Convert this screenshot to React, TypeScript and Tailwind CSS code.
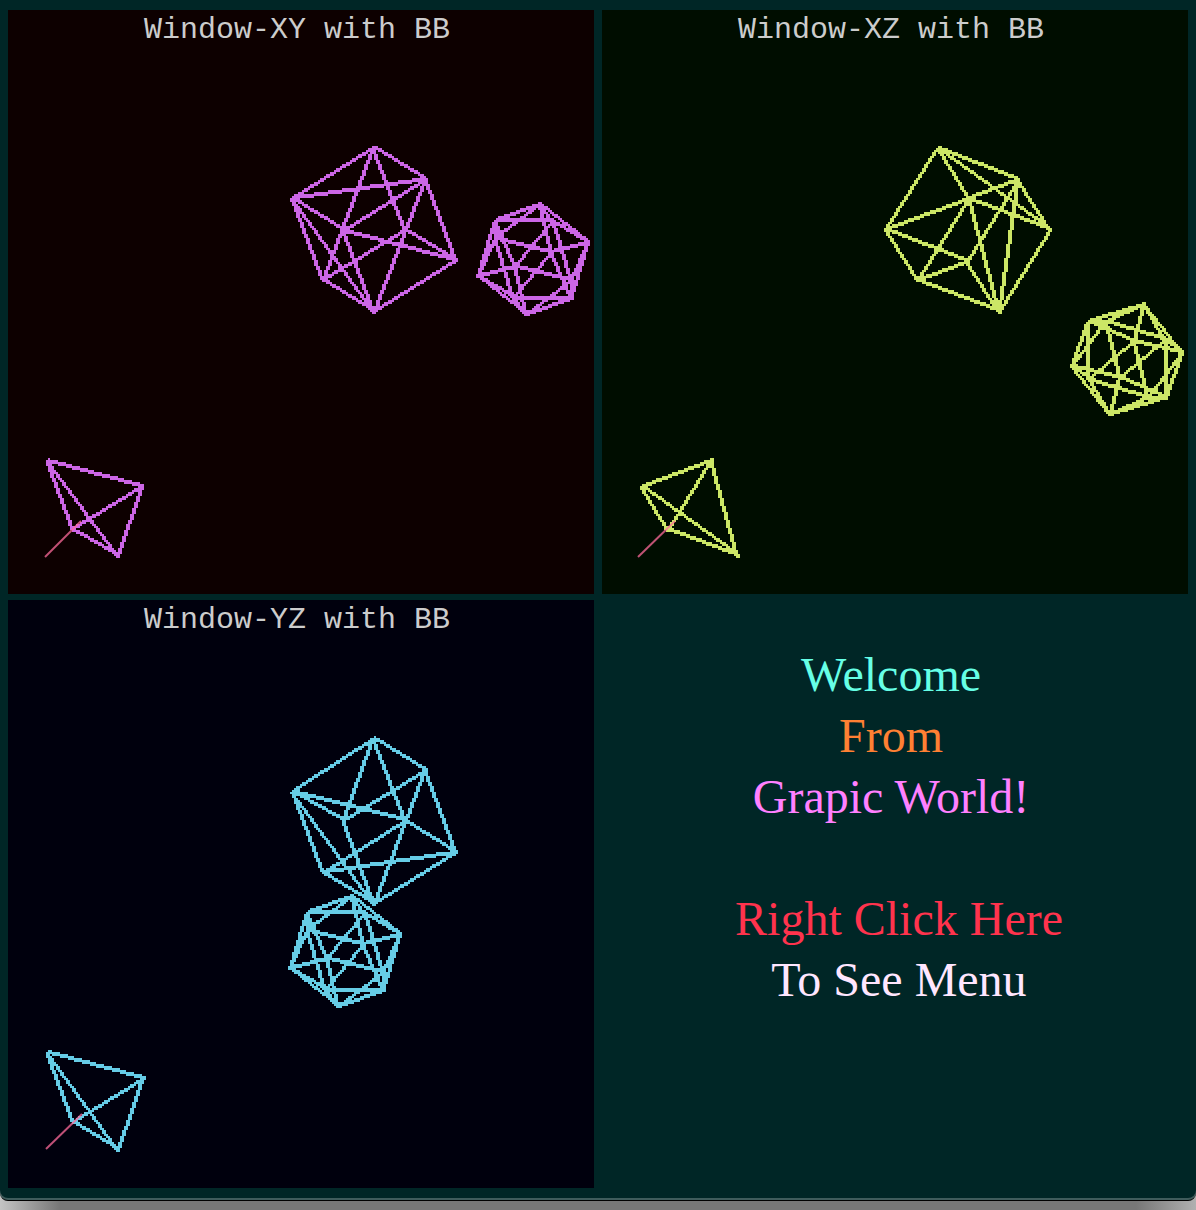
type Point = [number, number];
type Edge = [Point, Point];

const CELL = 2;

/** Rasterises one edge to a run of square cells, two cells thick. */
function rasterEdge([[ax, ay], [bx, by]]: Edge): string {
  const x0 = ax / CELL;
  const y0 = ay / CELL;
  const x1 = bx / CELL;
  const y1 = by / CELL;
  const dx = x1 - x0;
  const dy = y1 - y0;
  const steps = Math.max(1, Math.round(Math.max(Math.abs(dx), Math.abs(dy))));
  const flat = Math.abs(dx) >= Math.abs(dy);
  let d = "";
  for (let i = 0; i <= steps; i++) {
    const x = Math.round(x0 + (dx * i) / steps) * CELL;
    const y = Math.round(y0 + (dy * i) / steps) * CELL;
    d += flat ? `M${x} ${y - 2}h2v4h-2z` : `M${x - 2} ${y}h4v2h-4z`;
  }
  return d;
}

function link(points: Record<string, Point>, pairs: string): Edge[] {
  return pairs.split(" ").map((pair) => {
    const [a, b] = pair.split("-");
    return [points[a], points[b]] as Edge;
  });
}

const ICOSA_HALF: Record<string, Point> = {
  T: [7, -55],
  R: [55, -17],
  E: [38, 39],
  Q: [20, -38],
  W: [-38, -21],
  S: [18, -7],
};

/** An icosahedron seen from the side; lower-case names are the opposite vertices. */
function icosahedron(cx: number, cy: number, transpose = false): Edge[] {
  const points: Record<string, Point> = {};
  for (const [name, [px, py]] of Object.entries(ICOSA_HALF)) {
    const [x, y] = transpose ? [py, px] : [px, py];
    points[name] = [cx + x, cy + y];
    points[name.toLowerCase()] = [cx - x, cy - y];
  }
  return link(
    points,
    "T-e T-W T-Q T-S T-R e-Q e-W e-r e-s W-r W-S W-q Q-R Q-w Q-s S-R S-q S-E t-E t-w t-q t-s t-r E-q E-w E-R w-R w-s q-r s-r",
  );
}

const TETRA = "A-B A-C A-D B-C B-D C-D";

const XY: Edge[] = [
  ...link(
    { T: [373, 147], U: [425, 179], L: [292, 198], C: [343, 230], D: [405, 229], R: [456, 260], M: [323, 279], B: [374, 311] },
    "T-L T-U T-M T-D L-U L-C L-M L-B C-U C-B C-R D-M D-R U-B U-R R-B M-B",
  ),
  ...icosahedron(533, 259),
  ...link({ A: [47, 460], B: [142, 486], C: [73, 529], D: [118, 555] }, TETRA),
];

const XZ: Edge[] = [
  ...link(
    { T: [937, 147], U: [1018, 179], C: [969, 198], R: [1050, 229], L: [885, 229], M: [967, 261], N: [918, 280], B: [999, 311] },
    "T-U T-C T-R T-L C-U C-L C-R C-N C-B U-R U-B U-M M-L M-N M-B L-N N-B B-R",
  ),
  ...icosahedron(1127, 359, true),
  ...link({ A: [711, 460], B: [641, 486], C: [668, 529], D: [737, 555] }, TETRA),
];

const YZ: Edge[] = [
  ...link(
    { T: [373, 738], U: [425, 770], L: [292, 791], C: [343, 820], D: [405, 820], R: [456, 852], M: [323, 872], B: [374, 903] },
    "T-L T-U T-C T-D U-C U-R U-B L-D L-C L-M L-B C-B D-M D-R M-R M-B B-R",
  ),
  ...icosahedron(345, 951),
  ...link({ A: [47, 1052], B: [143, 1078], C: [73, 1121], D: [118, 1149] }, TETRA),
];

interface ViewProps {
  title: string;
  surface: string;
  ink: string;
  viewBox: string;
  edges: Edge[];
  axis: string;
}

function View({ title, surface, ink, viewBox, edges, axis }: ViewProps) {
  return (
    <section className={surface}>
      <h2 className="h-9 pr-2 text-center font-['Liberation_Mono',monospace] text-[30px] leading-10 text-[#cccccc]">
        {title}
      </h2>
      <svg viewBox={viewBox} className="block w-full" role="img" aria-label={title}>
        <path d={edges.map(rasterEdge).join("")} className={ink} />
        <path d={axis} className="stroke-[#ff6b9b]/75" strokeWidth="2" />
      </svg>
    </section>
  );
}

export default function App() {
  return (
    <div className="min-h-screen bg-[linear-gradient(to_right,#c4c4c4,#777777_60px,#777777_calc(100%-60px),#b0b0b0)] pb-[9px]">
      <main className="rounded-b-lg border-b border-black bg-[#3f5c5c] pb-[2px]">
        <div className="grid grid-cols-2 gap-x-2 gap-y-1.5 rounded-b-lg bg-[#002626] px-2 py-2.5">
          <View
            title="Window-XY with BB"
            surface="bg-[#0d0000]"
            ink="fill-[#cc66e6]"
            viewBox="8 46 586 548"
            edges={XY}
            axis="M45 557L81 521"
          />
          <View
            title="Window-XZ with BB"
            surface="bg-[#000d00]"
            ink="fill-[#cce666]"
            viewBox="602 46 586 548"
            edges={XZ}
            axis="M638 557L675 521"
          />
          <View
            title="Window-YZ with BB"
            surface="bg-[#00000d]"
            ink="fill-[#66cce6]"
            viewBox="8 636 586 552"
            edges={YZ}
            axis="M46 1149L82 1114"
          />
          <section className="pt-11 text-center font-['Liberation_Serif',serif] text-[48px] leading-[61px]">
            <h1 className="pr-2">
              <span className="block text-[#66ffe6]">Welcome</span>
              <span className="block text-[#ff8033]">From</span>
              <span className="block text-[#ff80ff]">Grapic World!</span>
            </h1>
            <p className="mt-[61px] pl-2">
              <span className="block text-[#ff334d]">Right Click Here</span>
              <span className="block text-[#ffe6ff]">To See Menu</span>
            </p>
          </section>
        </div>
      </main>
    </div>
  );
}
